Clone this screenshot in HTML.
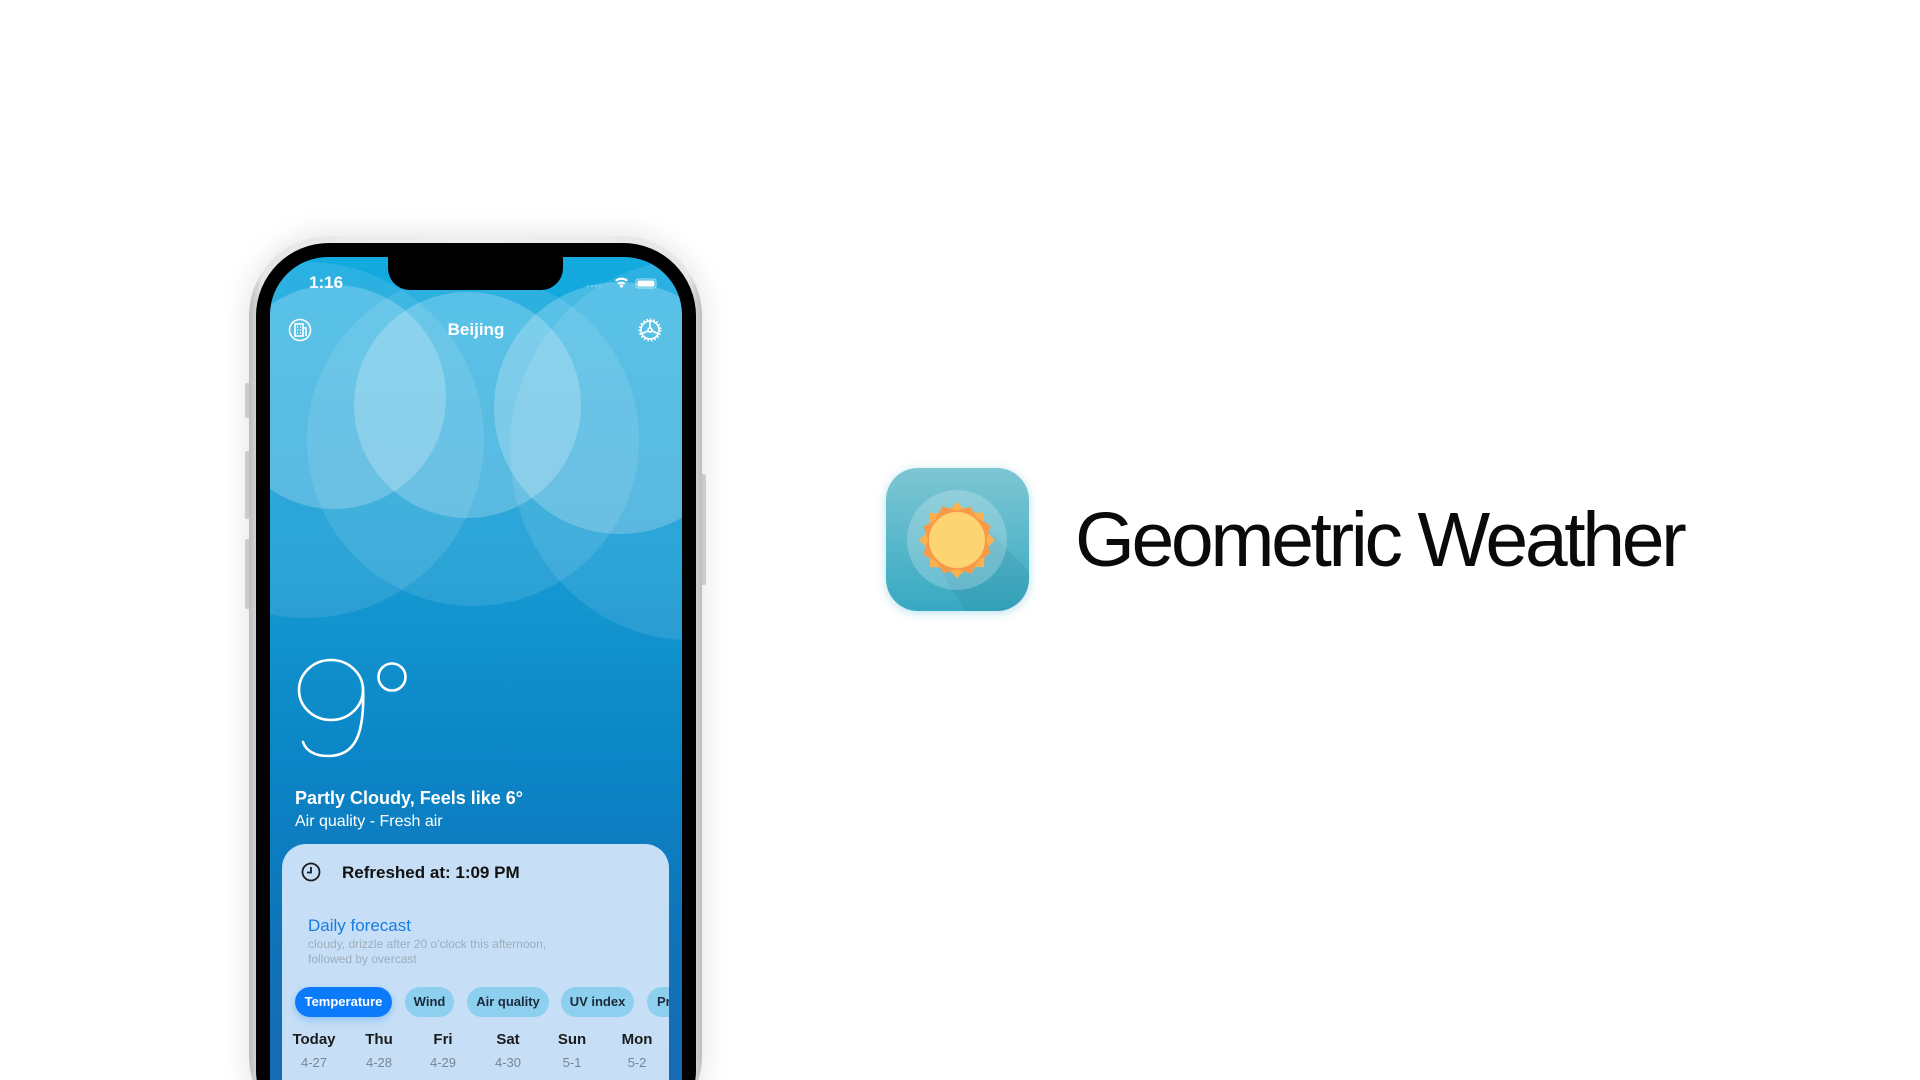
<!DOCTYPE html>
<html><head><meta charset="utf-8"><style>
html,body{margin:0;padding:0;width:1920px;height:1080px;overflow:hidden;background:#fff;font-family:"Liberation Sans",sans-serif;}
#wrap{position:relative;width:1920px;height:1080px;overflow:hidden}
.abs{position:absolute}
.frame{left:249px;top:236px;width:453px;height:900px;border-radius:80px;background:linear-gradient(90deg,#bdbdbd,#e6e6e6 3%,#f0f0f0 50%,#e6e6e6 97%,#bdbdbd);box-shadow:0 0 30px rgba(0,0,0,0.12)}
.bezel{left:256px;top:243px;width:440px;height:900px;border-radius:73px;background:#000}
.screen{left:270px;top:257px;width:412px;height:900px;border-radius:58px;overflow:hidden;background:linear-gradient(180deg,#13aadf 0%,#1599d2 35%,#0b86c6 55%,#0f74bb 75%,#1a66b0 100%)}
.c{position:absolute;border-radius:50%;background:rgba(255,255,255,0.22)}
.btn{position:absolute;background:#d8d8d8;border-radius:2px}
.chip{position:absolute;top:987px;height:30px;border-radius:15px;background:#8dcfee;font-size:13px;font-weight:bold;color:#1c2a3a;line-height:30px;text-align:center}
.day{position:absolute;width:60px;text-align:center;font-size:15px;font-weight:bold;color:#1b1b1b}
.dt{position:absolute;width:60px;text-align:center;font-size:13px;color:#7a8594}
</style></head><body><div id="wrap">
<div class="btn" style="left:245px;top:383px;width:5px;height:35px"></div>
<div class="btn" style="left:245px;top:451px;width:5px;height:68px"></div>
<div class="btn" style="left:245px;top:539px;width:5px;height:70px"></div>
<div class="btn" style="left:701px;top:474px;width:5px;height:111px"></div>
<div class="abs frame"></div>
<div class="abs bezel"></div>
<div class="abs screen">
  <div class="c" style="left:-142px;top:5px;width:356px;height:356px;background:rgba(255,255,255,0.1)"></div>
  <div class="c" style="left:37px;top:17px;width:332px;height:332px;background:rgba(255,255,255,0.1)"></div>
  <div class="c" style="left:240px;top:3px;width:360px;height:380px;background:rgba(255,255,255,0.1)"></div>
  <div class="c" style="left:-48px;top:28px;width:224px;height:224px"></div>
  <div class="c" style="left:84px;top:35px;width:227px;height:226px"></div>
  <div class="c" style="left:224px;top:25px;width:252px;height:252px"></div>
  <div class="abs" style="left:118px;top:0;width:175px;height:33px;background:#000;border-radius:0 0 22px 22px"></div>
  <div class="abs" style="left:39px;top:16px;color:#fff;font-size:17px;font-weight:bold">1:16</div>
  <svg class="abs" style="left:0;top:0" width="412" height="120">
    <g fill="#fff"><path d="M345 23 a10 10 0 0 1 13 0 l-1.5 1.6 a8 8 0 0 0 -10 0z"/><path d="M347.5 26 a6 6 0 0 1 8 0 l-1.5 1.6 a4 4 0 0 0 -5 0z"/><circle cx="351.5" cy="29" r="1.6"/>
    <rect x="366" y="22" width="20" height="9" rx="2.5" fill="none" stroke="#fff" stroke-opacity=".6"/><rect x="367.5" y="23.5" width="17" height="6" rx="1.5"/>
    <g fill-opacity=".35"><circle cx="318" cy="29" r="1"/><circle cx="322" cy="29" r="1"/><circle cx="326" cy="29" r="1"/><circle cx="330" cy="29" r="1"/></g></g>
    <g stroke="#fff" fill="none" stroke-width="1.6"><circle cx="30" cy="73" r="10.5"/><rect x="25" y="67" width="8" height="12"/><path d="M33 71h3v8"/><path d="M27 70h1M30 70h1M27 73h1M30 73h1M27 76h1M30 76h1"/>
    <circle cx="380" cy="73" r="9"/><circle cx="380" cy="73" r="2"/><path d="M380 71v-8M382 74l7 3M378 74l-7 3"/><circle cx="380" cy="73" r="10.5" stroke-dasharray="1.5 2" stroke-width="2"/></g>
  </svg>
  <div class="abs" style="left:0;width:412px;top:63px;text-align:center;color:#fff;font-size:17px;font-weight:bold">Beijing</div>
  <svg class="abs" style="left:0;top:380px" width="412" height="140">
    <g stroke="#fff" stroke-width="2.6" fill="none" stroke-linecap="round">
      <ellipse cx="61" cy="53" rx="32" ry="30"/>
      <path d="M93 50 C95 100 84 119 58 119 C45 119 36 114 33 105"/>
      <circle cx="122" cy="40" r="13.5"/>
    </g>
  </svg>
  <div class="abs" style="left:25px;top:531px;color:#fff;font-size:18px;font-weight:bold">Partly Cloudy, Feels like 6°</div>
  <div class="abs" style="left:25px;top:556px;color:#fff;font-size:16px">Air quality - Fresh air</div>
  <div class="abs" style="left:12px;top:587px;width:387px;height:400px;border-radius:24px;background:#c6dff6"></div>
</div>
<svg class="abs" style="left:300px;top:861px" width="22" height="22"><circle cx="11" cy="11" r="8.5" fill="none" stroke="#1b1b1b" stroke-width="1.8"/><path d="M11 6v5.5h-4" fill="none" stroke="#1b1b1b" stroke-width="1.8"/></svg>
<div class="abs" style="left:342px;top:863px;font-size:17px;font-weight:bold;color:#111">Refreshed at: 1:09 PM</div>
<div class="abs" style="left:308px;top:916px;font-size:17px;color:#1a7be0">Daily forecast</div>
<div class="abs" style="left:308px;top:937px;font-size:12px;line-height:15px;color:#9fadbd">cloudy, drizzle after 20 o'clock this afternoon,<br>followed by overcast</div>
<div class="chip" style="left:295px;width:97px;background:#0b7bfc;color:#fff;box-shadow:0 3px 8px rgba(11,123,252,.3)">Temperature</div>
<div class="chip" style="left:405px;width:49px">Wind</div>
<div class="chip" style="left:467px;width:82px">Air quality</div>
<div class="chip" style="left:561px;width:73px">UV index</div>
<div class="abs" style="left:647px;top:987px;width:22px;height:30px;overflow:hidden"><div class="chip" style="left:0;top:0;width:60px;text-align:left;padding-left:10px">Pr</div></div>
<div class="day" style="left:284px;top:1031px">Today</div><div class="dt" style="left:284px;top:1055px">4-27</div>
<div class="day" style="left:349px;top:1031px">Thu</div><div class="dt" style="left:349px;top:1055px">4-28</div>
<div class="day" style="left:413px;top:1031px">Fri</div><div class="dt" style="left:413px;top:1055px">4-29</div>
<div class="day" style="left:478px;top:1031px">Sat</div><div class="dt" style="left:478px;top:1055px">4-30</div>
<div class="day" style="left:542px;top:1031px">Sun</div><div class="dt" style="left:542px;top:1055px">5-1</div>
<div class="day" style="left:607px;top:1031px">Mon</div><div class="dt" style="left:607px;top:1055px">5-2</div>

<div class="abs" style="left:886px;top:468px;width:143px;height:143px;border-radius:32px;background:linear-gradient(180deg,#7ec6d3,#37a9c3);box-shadow:0 2px 10px rgba(60,170,200,.35);overflow:hidden">
<svg width="143" height="143">
  <path d="M90 50 L160 120 L160 160 L90 160 L50 95z" fill="rgba(0,60,80,0.08)"/>
  <circle cx="71" cy="72" r="50" fill="rgba(255,255,255,0.22)"/>
  <g transform="translate(71 72)">
    <polygon fill="#fbb24e" points="0,-38 10,-28 27,-27 27,-11 38,0 28,10 27,27 11,27 0,38 -10,28 -27,27 -27,11 -38,0 -28,-10 -27,-27 -11,-27"/>
    <polygon fill="#f89a4a" transform="rotate(22)" points="0,-36 10,-28 26,-26 27,-11 36,0 28,10 26,26 11,27 0,36 -10,28 -26,26 -27,11 -36,0 -28,-10 -26,-26 -11,-27"/>
    <circle r="28" fill="#fdd472"/>
  </g>
</svg></div>
<div class="abs" style="left:1075px;top:496px;font-size:77px;letter-spacing:-3.4px;color:#0a0a0a">Geometric Weather</div>
</div></body></html>
